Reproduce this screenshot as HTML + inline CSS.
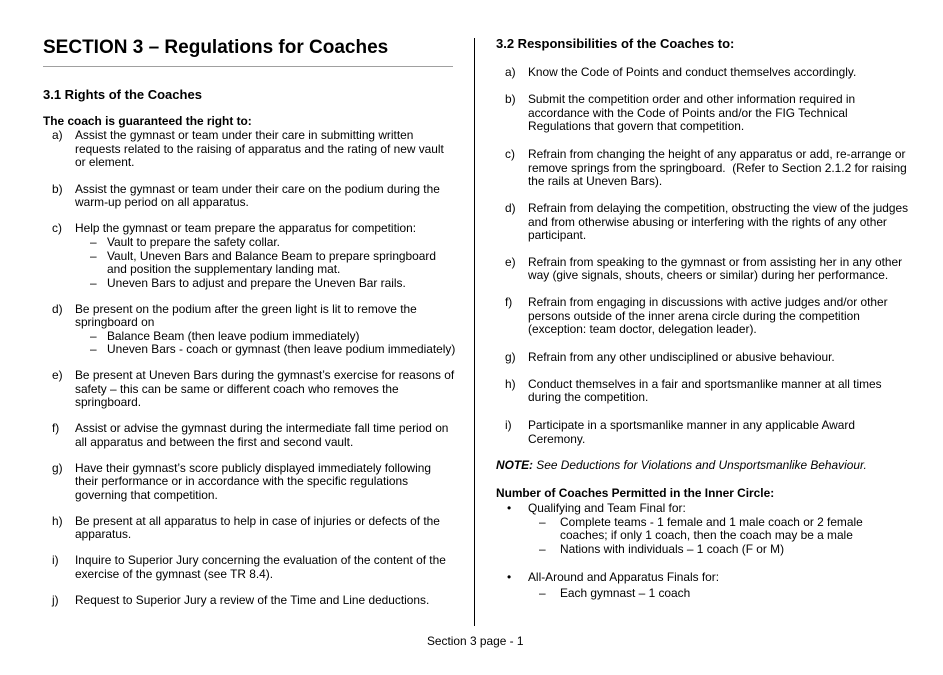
<!DOCTYPE html>
<html><head><meta charset="utf-8"><style>
body{margin:0;background:#fff;width:943px;height:675px;position:relative;overflow:hidden;font-family:"Liberation Sans",Arial,sans-serif;color:#000}
.l{position:absolute;font-size:11.9px;line-height:14px;white-space:nowrap}
.b{font-weight:bold}
</style></head><body>
<div class="l b" style="left:43px;top:36px;font-size:19px;line-height:24px">SECTION 3 – Regulations for Coaches</div>
<div style="position:absolute;left:43px;top:66px;width:410px;height:1px;background:#a0a0a0"></div>
<div style="position:absolute;left:474px;top:38px;width:1px;height:588px;background:#000"></div>
<div class="l b" style="left:43px;top:87px;font-size:13px;line-height:16px">3.1 Rights of the Coaches</div>
<div class="l b" style="left:43px;top:114px">The coach is guaranteed the right to:</div>

<div class="l" style="left:52px;top:128px">a)</div>
<div class="l" style="left:75px;top:128px">Assist the gymnast or team under their care in submitting written</div>
<div class="l" style="left:75px;top:142px">requests related to the raising of apparatus and the rating of new vault</div>
<div class="l" style="left:75px;top:155px">or element.</div>

<div class="l" style="left:52px;top:182px">b)</div>
<div class="l" style="left:75px;top:182px">Assist the gymnast or team under their care on the podium during the</div>
<div class="l" style="left:75px;top:195px">warm-up period on all apparatus.</div>

<div class="l" style="left:52px;top:221px">c)</div>
<div class="l" style="left:75px;top:221px">Help the gymnast or team prepare the apparatus for competition:</div>
<div class="l" style="left:90px;top:235px">–</div><div class="l" style="left:107px;top:235px">Vault to prepare the safety collar.</div>
<div class="l" style="left:90px;top:249px">–</div><div class="l" style="left:107px;top:249px">Vault, Uneven Bars and Balance Beam to prepare springboard</div>
<div class="l" style="left:107px;top:262px">and position the supplementary landing mat.</div>
<div class="l" style="left:90px;top:276px">–</div><div class="l" style="left:107px;top:276px">Uneven Bars to adjust and prepare the Uneven Bar rails.</div>

<div class="l" style="left:52px;top:302px">d)</div>
<div class="l" style="left:75px;top:302px">Be present on the podium after the green light is lit to remove the</div>
<div class="l" style="left:75px;top:315px">springboard on</div>
<div class="l" style="left:90px;top:329px">–</div><div class="l" style="left:107px;top:329px">Balance Beam (then leave podium immediately)</div>
<div class="l" style="left:90px;top:342px">–</div><div class="l" style="left:107px;top:342px">Uneven Bars - coach or gymnast (then leave podium immediately)</div>

<div class="l" style="left:52px;top:368px">e)</div>
<div class="l" style="left:75px;top:368px">Be present at Uneven Bars during the gymnast’s exercise for reasons of</div>
<div class="l" style="left:75px;top:382px">safety – this can be same or different coach who removes the</div>
<div class="l" style="left:75px;top:395px">springboard.</div>

<div class="l" style="left:52px;top:421px">f)</div>
<div class="l" style="left:75px;top:421px">Assist or advise the gymnast during the intermediate fall time period on</div>
<div class="l" style="left:75px;top:435px">all apparatus and between the first and second vault.</div>

<div class="l" style="left:52px;top:461px">g)</div>
<div class="l" style="left:75px;top:461px">Have their gymnast’s score publicly displayed immediately following</div>
<div class="l" style="left:75px;top:474px">their performance or in accordance with the specific regulations</div>
<div class="l" style="left:75px;top:488px">governing that competition.</div>

<div class="l" style="left:52px;top:514px">h)</div>
<div class="l" style="left:75px;top:514px">Be present at all apparatus to help in case of injuries or defects of the</div>
<div class="l" style="left:75px;top:527px">apparatus.</div>

<div class="l" style="left:52px;top:553px">i)</div>
<div class="l" style="left:75px;top:553px">Inquire to Superior Jury concerning the evaluation of the content of the</div>
<div class="l" style="left:75px;top:567px">exercise of the gymnast (see TR 8.4).</div>

<div class="l" style="left:52px;top:593px">j)</div>
<div class="l" style="left:75px;top:593px">Request to Superior Jury a review of the Time and Line deductions.</div>

<div class="l b" style="left:496px;top:36px;font-size:13px;line-height:16px">3.2 Responsibilities of the Coaches to:</div>

<div class="l" style="left:505px;top:65px">a)</div>
<div class="l" style="left:528px;top:65px">Know the Code of Points and conduct themselves accordingly.</div>

<div class="l" style="left:505px;top:92px">b)</div>
<div class="l" style="left:528px;top:92px">Submit the competition order and other information required in</div>
<div class="l" style="left:528px;top:106px">accordance with the Code of Points and/or the FIG Technical</div>
<div class="l" style="left:528px;top:119px">Regulations that govern that competition.</div>

<div class="l" style="left:505px;top:147px">c)</div>
<div class="l" style="left:528px;top:147px">Refrain from changing the height of any apparatus or add, re-arrange or</div>
<div class="l" style="left:528px;top:161px">remove springs from the springboard.&nbsp; (Refer to Section 2.1.2 for raising</div>
<div class="l" style="left:528px;top:174px">the rails at Uneven Bars).</div>

<div class="l" style="left:505px;top:201px">d)</div>
<div class="l" style="left:528px;top:201px">Refrain from delaying the competition, obstructing the view of the judges</div>
<div class="l" style="left:528px;top:215px">and from otherwise abusing or interfering with the rights of any other</div>
<div class="l" style="left:528px;top:228px">participant.</div>

<div class="l" style="left:505px;top:255px">e)</div>
<div class="l" style="left:528px;top:255px">Refrain from speaking to the gymnast or from assisting her in any other</div>
<div class="l" style="left:528px;top:268px">way (give signals, shouts, cheers or similar) during her performance.</div>

<div class="l" style="left:505px;top:295px">f)</div>
<div class="l" style="left:528px;top:295px">Refrain from engaging in discussions with active judges and/or other</div>
<div class="l" style="left:528px;top:309px">persons outside of the inner arena circle during the competition</div>
<div class="l" style="left:528px;top:322px">(exception: team doctor, delegation leader).</div>

<div class="l" style="left:505px;top:350px">g)</div>
<div class="l" style="left:528px;top:350px">Refrain from any other undisciplined or abusive behaviour.</div>

<div class="l" style="left:505px;top:377px">h)</div>
<div class="l" style="left:528px;top:377px">Conduct themselves in a fair and sportsmanlike manner at all times</div>
<div class="l" style="left:528px;top:390px">during the competition.</div>

<div class="l" style="left:505px;top:418px">i)</div>
<div class="l" style="left:528px;top:418px">Participate in a sportsmanlike manner in any applicable Award</div>
<div class="l" style="left:528px;top:432px">Ceremony.</div>

<div class="l" style="left:496px;top:458px;font-style:italic"><b>NOTE:</b> See Deductions for Violations and Unsportsmanlike Behaviour.</div>

<div class="l b" style="left:496px;top:486px">Number of Coaches Permitted in the Inner Circle:</div>
<div class="l" style="left:507px;top:501px">•</div><div class="l" style="left:528px;top:501px">Qualifying and Team Final for:</div>
<div class="l" style="left:539px;top:515px">–</div><div class="l" style="left:560px;top:515px">Complete teams - 1 female and 1 male coach or 2 female</div>
<div class="l" style="left:560px;top:528px">coaches; if only 1 coach, then the coach may be a male</div>
<div class="l" style="left:539px;top:542px">–</div><div class="l" style="left:560px;top:542px">Nations with individuals – 1 coach (F or M)</div>
<div class="l" style="left:507px;top:570px">•</div><div class="l" style="left:528px;top:570px">All-Around and Apparatus Finals for:</div>
<div class="l" style="left:539px;top:586px">–</div><div class="l" style="left:560px;top:586px">Each gymnast – 1 coach</div>

<div class="l" style="left:427px;top:634px">Section 3 page - 1</div>
</body></html>
